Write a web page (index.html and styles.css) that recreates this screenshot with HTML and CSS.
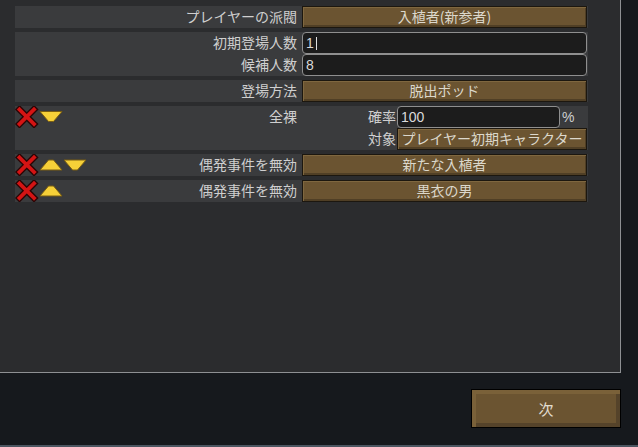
FILE: index.html
```html
<!DOCTYPE html>
<html lang="ja">
<head>
<meta charset="utf-8">
<link rel="stylesheet" href="styles.css">
</head>
<body>
<div class="panel">
  <div class="list">
    <div class="row">
      <div class="left"><span class="label">プレイヤーの派閥</span></div>
      <div class="right"><div class="btn">入植者(新参者)</div></div>
    </div>
    <div class="row tall">
      <div class="left stack">
        <span class="label">初期登場人数</span>
        <span class="label">候補人数</span>
      </div>
      <div class="right stack">
        <div class="input">1<span class="caret"></span></div>
        <div class="input">8</div>
      </div>
    </div>
    <div class="row">
      <div class="left"><span class="label">登場方法</span></div>
      <div class="right"><div class="btn">脱出ポッド</div></div>
    </div>
    <div class="row tall">
      <div class="left top">
        <span class="icon"><svg width="24" height="22" viewBox="0 0 24 22"><path d="M4.5 3.5 L19 18 M19 3.5 L4.5 18" stroke="#2a0505" stroke-width="6.5" stroke-linecap="square"/><path d="M4.5 3.5 L19 18 M19 3.5 L4.5 18" stroke="#d41414" stroke-width="3.8" stroke-linecap="square"/></svg></span>
        <span class="icon"><svg width="24" height="22" viewBox="0 0 24 22"><path d="M1 5.5 H23 L14.5 15.5 H9.5 Z" fill="#f6d038" stroke="#7a5e12" stroke-width="1" stroke-linejoin="round"/></svg></span>
        <span class="label">全裸</span>
      </div>
      <div class="right sub">
        <span class="sublabel">確率</span>
        <div class="input small">100</div>
        <span class="pct">%</span>
        <span class="sublabel">対象</span>
        <div class="btn wide">プレイヤー初期キャラクター</div>
      </div>
    </div>
    <div class="row">
      <div class="left">
        <span class="icon"><svg width="24" height="22" viewBox="0 0 24 22"><path d="M4.5 3.5 L19 18 M19 3.5 L4.5 18" stroke="#2a0505" stroke-width="6.5" stroke-linecap="square"/><path d="M4.5 3.5 L19 18 M19 3.5 L4.5 18" stroke="#d41414" stroke-width="3.8" stroke-linecap="square"/></svg></span>
        <span class="icon"><svg width="24" height="22" viewBox="0 0 24 22"><path d="M9.5 6 H14.5 L23 16 H1 Z" fill="#f6d038" stroke="#7a5e12" stroke-width="1" stroke-linejoin="round"/></svg></span>
        <span class="icon"><svg width="24" height="22" viewBox="0 0 24 22"><path d="M1 6 H23 L14.5 16 H9.5 Z" fill="#f6d038" stroke="#7a5e12" stroke-width="1" stroke-linejoin="round"/></svg></span>
        <span class="label">偶発事件を無効</span>
      </div>
      <div class="right"><div class="btn">新たな入植者</div></div>
    </div>
    <div class="row">
      <div class="left">
        <span class="icon"><svg width="24" height="22" viewBox="0 0 24 22"><path d="M4.5 3.5 L19 18 M19 3.5 L4.5 18" stroke="#2a0505" stroke-width="6.5" stroke-linecap="square"/><path d="M4.5 3.5 L19 18 M19 3.5 L4.5 18" stroke="#d41414" stroke-width="3.8" stroke-linecap="square"/></svg></span>
        <span class="icon"><svg width="24" height="22" viewBox="0 0 24 22"><path d="M9.5 6 H14.5 L23 16 H1 Z" fill="#f6d038" stroke="#7a5e12" stroke-width="1" stroke-linejoin="round"/></svg></span>
        <span class="label">偶発事件を無効</span>
      </div>
      <div class="right"><div class="btn">黒衣の男</div></div>
    </div>
  </div>
</div>
<div class="footer">
  <div class="next">次</div>
</div>
<div class="taskbar"></div>
</body>
</html>
```
FILE: styles.css
```css
* { box-sizing: border-box; }
html, body { margin: 0; padding: 0; }
body {
  width: 638px;
  height: 447px;
  overflow: hidden;
  background: #16191d;
  font-family: "Noto Sans CJK JP", "Noto Sans", sans-serif;
  font-size: 14px;
  color: #cfcfcf;
}
.panel {
  width: 621px;
  height: 373px;
  background: #2b2c2e;
  border-right: 1px solid #8e9093;
  border-bottom: 1px solid #8e9093;
  padding: 6px 0 0 15px;
}
.list {
  display: flex;
  flex-direction: column;
  gap: 4px;
  width: 573px;
}
.row {
  display: flex;
  background: #3a3b3d;
  height: 22px;
}
.row.tall { height: 44px; }
.left {
  width: 287px;
  display: flex;
  align-items: center;
  padding-right: 5px;
}
.left.top { align-items: flex-start; }
.left.stack {
  flex-direction: column;
  align-items: flex-end;
}
.label {
  flex: 1;
  text-align: right;
  line-height: 20px;
  height: 22px;
  white-space: nowrap;
}
.left.stack .label { flex: none; }
.icon {
  width: 24px;
  height: 22px;
  display: block;
}
.icon svg { display: block; }
.right {
  width: 285px;
  display: flex;
  flex-direction: column;
}
.btn {
  height: 22px;
  background: #6b5431;
  border: 1px solid #1c170f;
  box-shadow: inset 1px 1px 0 #7f673f, inset -1px -2px 0 #503f25;
  color: #dcd8cc;
  text-align: center;
  line-height: 19px;
  white-space: nowrap;
  overflow: hidden;
}
.input {
  height: 22px;
  background: #1c1c1c;
  border: 1px solid #8f8f8f;
  border-radius: 4px;
  font-family: "Liberation Sans", sans-serif;
  font-size: 14px;
  color: #dadada;
  padding-left: 3px;
  line-height: 20px;
  display: flex;
  align-items: center;
}
.caret {
  display: inline-block;
  width: 1px;
  height: 13px;
  background: #e0e0e0;
  margin-left: 2px;
}
.sub {
  display: grid;
  grid-template-columns: 95px 163px 27px;
  grid-template-rows: 22px 22px;
  width: 286px;
}
.sublabel {
  text-align: right;
  line-height: 20px;
  padding-right: 1px;
  white-space: nowrap;
}
.input.small { width: 163px; }
.pct {
  font-family: "Liberation Sans", sans-serif;
  line-height: 22px;
  padding-left: 2px;
}
.btn.wide {
  grid-column: 2 / span 2;
  width: 190px;
  padding: 0;
}
.footer {
  display: flex;
  justify-content: flex-end;
  padding: 16px 17px 0 0;
}
.next {
  width: 150px;
  height: 39px;
  background: #6b5431;
  border: 1px solid #000;
  box-shadow: inset 4px 4px 0 #7a6139, inset -4px -4px 0 #55432a;
  color: #e2ddd0;
  font-size: 15px;
  text-align: center;
  line-height: 37px;
}
.taskbar {
  margin-top: 17px;
  height: 2px;
  background: #4c5661;
}
```
